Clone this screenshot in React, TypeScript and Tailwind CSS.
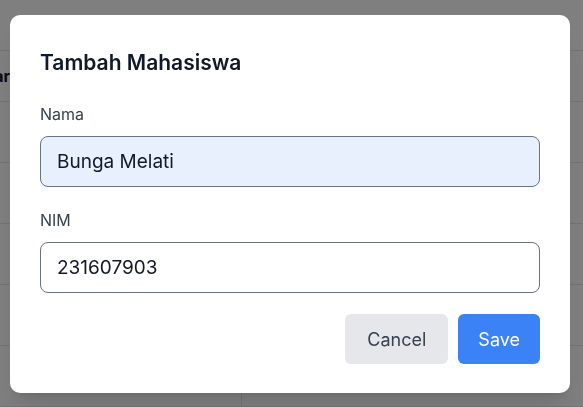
import React from 'react';

const rows = [1, 2, 3, 4, 5];

const App: React.FC = () => {
  return (
    <div className="relative min-h-[407px] bg-white font-['Inter',sans-serif] overflow-hidden">
      {/* table behind the dialog */}
      <div className="pt-[50px]">
        <div className="border-t border-gray-200">
          <div className="grid grid-cols-[242px_1fr] h-[51px] border-b border-gray-200 items-center">
            <div className="flex justify-end w-[10px] whitespace-nowrap font-bold text-[16px] text-gray-900">
              Daftar
            </div>
            <div />
          </div>
          {rows.map((r) => (
            <div key={r} className="grid grid-cols-[242px_1fr] h-[61px] border-b border-gray-200">
              <div className="border-r border-gray-200" />
              <div />
            </div>
          ))}
        </div>
      </div>

      {/* dialog */}
      <div className="fixed inset-0 bg-black/50">
        <div className="mt-[15px] ml-[10px] w-[560px] rounded-[10px] bg-white px-[30px] pt-[34px] pb-[29px] shadow-xl">
          <h2 className="text-[21px] leading-[28px] font-semibold text-[#111827]">Tambah Mahasiswa</h2>

          <div className="mt-[25px]">
            <label className="block text-[16px] leading-[24px] text-[#374151]">Nama</label>
            <input
              readOnly
              value="Bunga Melati"
              className="mt-[10px] block w-full h-[51px] rounded-lg border border-[#6b7280] bg-[#e8f0fe] px-4 text-[19px] text-[#111827] outline-none"
            />
          </div>

          <div className="mt-[21px]">
            <label className="block text-[16px] leading-[24px] text-[#374151]">NIM</label>
            <input
              readOnly
              value="231607903"
              className="mt-[10px] block w-full h-[51px] rounded-lg border border-[#6b7280] bg-white px-4 text-[19px] text-[#111827] outline-none"
            />
          </div>

          <div className="mt-[21px] flex justify-end gap-[10px]">
            <button className="h-[50px] rounded-md bg-[#e5e7eb] px-[22px] text-[18px] text-[#374151]">Cancel</button>
            <button className="h-[50px] rounded-md bg-[#3b82f6] px-5 text-[18px] text-white">Save</button>
          </div>
        </div>
      </div>
    </div>
  );
};

export default App;
